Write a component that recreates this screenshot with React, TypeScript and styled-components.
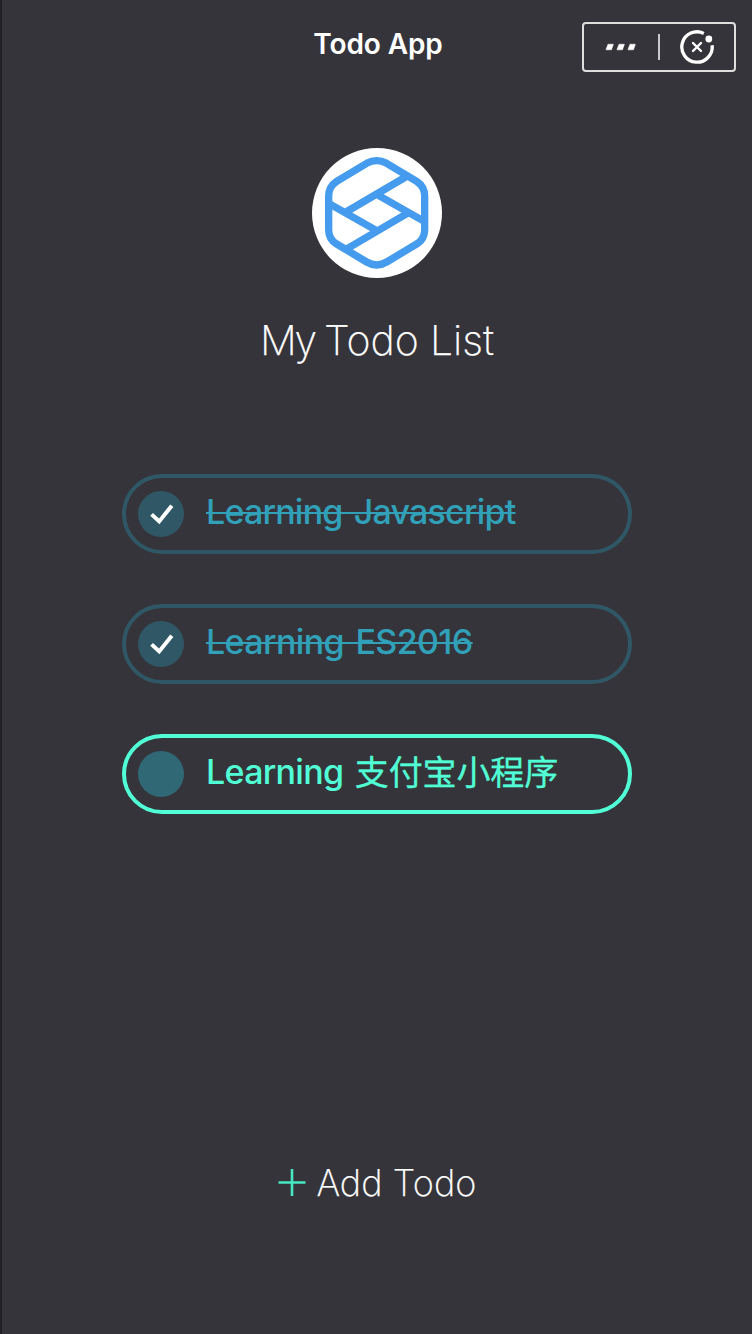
import React from 'react';
import styled, { createGlobalStyle } from 'styled-components';

const GlobalStyle = createGlobalStyle`
  *, *::before, *::after { box-sizing: border-box; }
  body { margin: 0; background: #35343a; }
`;

const Screen = styled.div`
  display: flex;
  flex-direction: column;
  align-items: center;
  width: 752px;
  height: 1334px;
  border-left: 2px solid #212128;
  background: #35343a;
  color: #fff;
  font-family: Inter, 'Noto Sans CJK SC', sans-serif;
  overflow: hidden;
`;

const NavBar = styled.header`
  display: grid;
  grid-template-columns: 1fr auto 1fr;
  width: 100%;
  height: 148px;
  padding: 22px 16px 0 18px;
  align-items: start;
`;

const NavTitle = styled.h1`
  grid-column: 2;
  margin: 0;
  font-size: 28px;
  line-height: 44px;
  font-weight: 600;
  letter-spacing: -0.1px;
  white-space: nowrap;
`;

const Capsule = styled.div`
  justify-self: end;
  display: flex;
  align-items: center;
  width: 154px;
  height: 50px;
  border: 2px solid #dedede;
  border-radius: 4px;
`;

const CapsuleButton = styled.button`
  flex: 1;
  display: flex;
  align-items: center;
  justify-content: center;
  height: 46px;
  padding: 0;
  border: 0;
  background: none;
`;

const CapsuleDivider = styled.span`
  width: 2px;
  height: 26px;
  background: #c9c9cb;
`;

const Avatar = styled.div`
  width: 130px;
  height: 130px;
  border-radius: 50%;
  background: #fff;
  svg { display: block; }
`;

const ListTitle = styled.h2`
  margin: 34px 0 0;
  height: 56px;
  font-size: 41px;
  line-height: 56px;
  font-weight: 250;
  letter-spacing: 0;
  word-spacing: -0.3px;
  white-space: nowrap;
  -webkit-text-stroke: 0.25px currentColor;
`;

const FirstWord = styled.span`
  letter-spacing: -2.2px;
`;

const TodoList = styled.ul`
  display: flex;
  flex-direction: column;
  gap: 50px;
  width: 510px;
  margin: 106px 0 0;
  padding: 0;
  list-style: none;
`;

const TodoItem = styled.li<{ $done: boolean }>`
  display: flex;
  align-items: center;
  height: 80px;
  padding-left: 12px;
  border: 4px solid ${p => (p.$done ? '#305765' : '#51ffd6')};
  border-radius: 40px;
  color: ${p => (p.$done ? '#31a0b9' : '#51ffd6')};
`;

const Check = styled.span<{ $done: boolean }>`
  display: flex;
  align-items: center;
  justify-content: center;
  width: 46px;
  height: 46px;
  border-radius: 50%;
  background: ${p => (p.$done ? '#305765' : '#306876')};
`;

const TodoText = styled.span<{ $done: boolean; $spacing: number }>`
  height: 50px;
  margin: 0 0 4px 22px;
  font-size: 34px;
  font-weight: 450;
  line-height: 50px;
  letter-spacing: ${p => p.$spacing}px;
  word-spacing: 3px;
  white-space: nowrap;
  text-decoration: ${p => (p.$done ? 'line-through' : 'none')};
  text-decoration-thickness: 2px;
`;

const Hanzi = styled.span`
  font-weight: 400;
  letter-spacing: -0.1px;
  vertical-align: -1px;
  -webkit-text-stroke: 0.3px currentColor;
`;

const AddButton = styled.button`
  display: flex;
  align-items: center;
  gap: 11px;
  margin-top: 344px;
  height: 50px;
  padding: 0;
  border: 0;
  background: none;
  color: #fff;
  font: 250 36px/50px Inter, sans-serif;
  letter-spacing: 0.1px;
  white-space: nowrap;
  -webkit-text-stroke: 0.25px currentColor;
`;

const Logo = () => (
  <svg width="130" height="130" viewBox="36 24 390 390" fill="none" stroke="#459bed" strokeWidth="22">
    <path d="M200 70Q230 54 260 70L350 124Q374 140 374 168V270Q374 298 350 312L260 366Q230 384 200 366L110 312Q86 298 86 270V168Q86 140 110 124Z" />
    <path d="M322 108L138 216M86 190L230 272M230 163L374 245M138 328L322 220" />
  </svg>
);

const MoreIcon = () => (
  <svg width="32" height="8" viewBox="0 0 32 8" fill="#fff">
    <path d="M3 1.2H8.4L6.5 6.8H.9ZM14 1.2H19.4L17.5 6.8H11.9ZM25 1.2H30.4L28.5 6.8H22.9Z" stroke="#fff" strokeWidth=".5" strokeLinejoin="round" />
  </svg>
);

const CloseIcon = () => (
  <svg width="36" height="36" viewBox="0 0 36 36" fill="none" stroke="#fff" strokeLinecap="round">
    <path d="M24.8 4.4A15.2 15.2 0 1 0 33.1 16.2" strokeWidth="3.3" strokeLinecap="butt" />
    <circle cx="29.8" cy="10" r="3.4" fill="#fff" stroke="none" />
    <path d="M14 14L22 22M22 14L14 22" strokeWidth="2.4" />
  </svg>
);

const Tick = () => (
  <svg width="26" height="22" viewBox="0 0 26 22" fill="none" stroke="#fff" strokeWidth="4">
    <path d="M3.6 11.4L11.2 18.4L23.8 2.7" />
  </svg>
);

const Plus = () => (
  <svg width="28" height="28" viewBox="0 0 28 28" stroke="#45e8c1" strokeWidth="2.6">
    <path d="M.5 13.5H27.5M14 0V27" />
  </svg>
);

const todos = [
  { text: 'Learning Javascript', done: true, spacing: -0.8 },
  { text: 'Learning ES2016', done: true, spacing: -0.62 },
  { text: 'Learning ', hanzi: '支付宝小程序', done: false, spacing: -0.7 },
];

export default function App() {
  return (
    <>
      <GlobalStyle />
      <Screen>
        <NavBar>
          <NavTitle>Todo App</NavTitle>
          <Capsule>
            <CapsuleButton aria-label="More"><MoreIcon /></CapsuleButton>
            <CapsuleDivider />
            <CapsuleButton aria-label="Close"><CloseIcon /></CapsuleButton>
          </Capsule>
        </NavBar>
        <Avatar><Logo /></Avatar>
        <ListTitle><FirstWord>My </FirstWord>Todo List</ListTitle>
        <TodoList>
          {todos.map(t => (
            <TodoItem key={t.text} $done={t.done}>
              <Check $done={t.done}>{t.done && <Tick />}</Check>
              <TodoText $done={t.done} $spacing={t.spacing}>
                {t.text}
                {t.hanzi && <Hanzi>{t.hanzi}</Hanzi>}
              </TodoText>
            </TodoItem>
          ))}
        </TodoList>
        <AddButton><Plus />Add Todo</AddButton>
      </Screen>
    </>
  );
}
